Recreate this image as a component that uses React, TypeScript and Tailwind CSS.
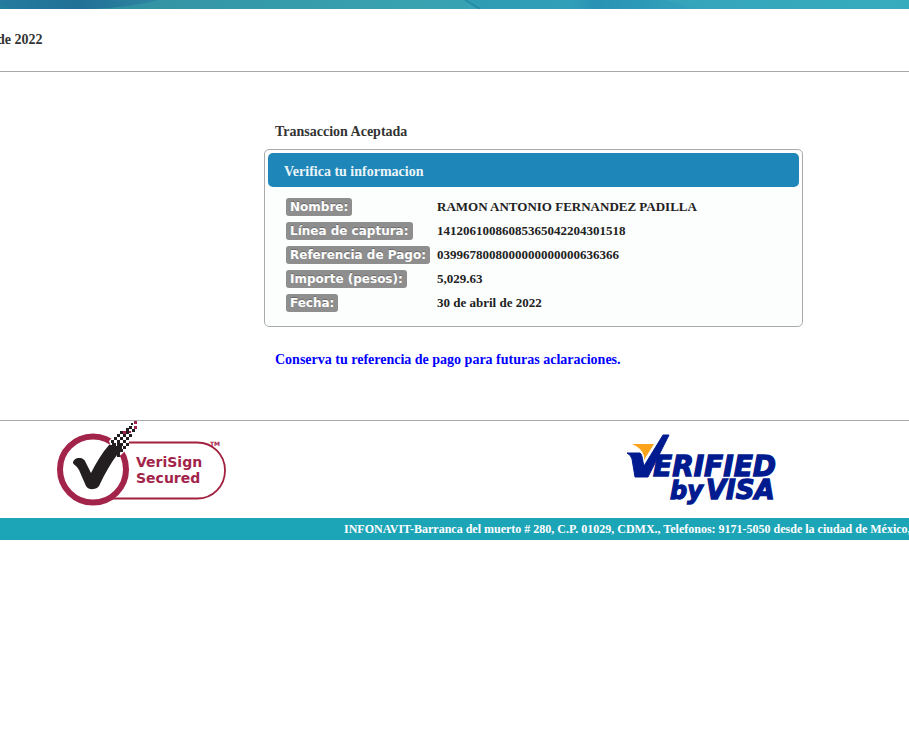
type Row = { label: string; value: string };

const rows: Row[] = [
  { label: "Nombre:", value: "RAMON ANTONIO FERNANDEZ PADILLA" },
  { label: "Línea de captura:", value: "14120610086085365042204301518" },
  { label: "Referencia de Pago:", value: "0399678008000000000000636366" },
  { label: "Importe (pesos):", value: "5,029.63" },
  { label: "Fecha:", value: "30 de abril de 2022" },
];

function Banner() {
  return (
    <svg className="block h-[9px] w-full" viewBox="0 0 909 9" preserveAspectRatio="none" aria-hidden="true">
      <defs>
        <linearGradient id="sea">
          <stop offset="0" stopColor="#23809b" />
          <stop offset="0.17" stopColor="#3494a4" />
          <stop offset="0.45" stopColor="#38a2b1" />
          <stop offset="0.72" stopColor="#36a4bb" />
          <stop offset="1" stopColor="#35acbd" />
        </linearGradient>
        <linearGradient id="deep">
          <stop offset="0" stopColor="#247b9e" />
          <stop offset="0.5" stopColor="#217096" />
          <stop offset="1" stopColor="#2f86a2" />
        </linearGradient>
        <linearGradient id="wave">
          <stop offset="0" stopColor="#2e9cb1" />
          <stop offset="0.45" stopColor="#329fb9" />
          <stop offset="0.55" stopColor="#2a93b5" />
          <stop offset="0.75" stopColor="#2d99b8" />
          <stop offset="1" stopColor="#35a4bb" />
        </linearGradient>
      </defs>
      <rect width="909" height="9" fill="url(#sea)" />
      <path d="M0 0H158Q132 7 92 9H12L0 5Z" fill="url(#deep)" />
      <path d="M465 0H665L700 9H480Z" fill="url(#wave)" />
      <path d="M465 0L480 9" stroke="#268ba5" strokeWidth="2" />
    </svg>
  );
}

function VeriSignLogo() {
  return (
    <svg className="block" width="172" height="88" viewBox="0 0 172 88" role="img" aria-label="VeriSign Secured">
      <path d="M66 21.500H142C158 21.500 170 34 170 49.500C170 65 158 77.500 142 77.500H56" fill="none" stroke="#a3203f" strokeWidth="1.800" />
      <circle cx="38" cy="48.500" r="33" fill="#fff" stroke="#a3244a" strokeWidth="6" />
      <path d="M54 20L60 14H74V26L66 34L60 36Z" fill="#fff" />
      <path d="M18 42C18 39 21 37 24 37C28 37 30 39 31 42L36 52C41 42 47 32 54 24H57V22H61V25H67V30H65V34H62C56 42 50 52 45 63C43 69 34 70 31 65L24 49C22 45 19 44 18 42Z" fill="#231f20" />
      <g fill="#231f20" shapeRendering="crispEdges">
        <path d="M56 19h3v3h-3zM62 19h3v3h-3zM59 16h3v3h-3zM65 22h3v3h-3zM65 28h3v3h-3zM62 13h3v3h-3zM65 16h3v3h-3zM68 19h3v3h-3zM62 22h3v3h-3zM68 25h3v3h-3zM62 33h3v3h-3zM65 10h3v3h-3zM68 13h3v3h-3zM71 16h3v3h-3zM71 22h3v3h-3zM71 10h3v3h-3zM74 13h3v3h-3zM71 7h3v3h-3zM74 5h3v3h-3zM77 8h3v3h-3zM76 2h2v2h-2z" />
      </g>
      <path d="M79 0h3v3h-3zM79 5h3v3h-3zM68 10h3v3h-3zM74 10h2v2h-2z" fill="#a3244a" shapeRendering="crispEdges" />
      <g fill="#a3244a" fontFamily="'DejaVu Sans', sans-serif" fontWeight="700">
        <text x="81" y="46" fontSize="14">VeriSign</text>
        <text x="81" y="62" fontSize="14">Secured</text>
        <text x="155" y="25" fontSize="6">TM</text>
      </g>
    </svg>
  );
}

function VisaLogo() {
  return (
    <svg className="block" width="160" height="80" viewBox="0 0 160 80" role="img" aria-label="Verified by Visa">
      <path d="M5 13H27L17 29V25Q15 17 5 13Z" fill="#fda31b" />
      <path d="M0 22H13Q15 23 16 31L17 35L36 4H42L21 46H8L5 28Q4 24 0 22Z" fill="#001a8f" stroke="#001a8f" />
      <g fill="#001a8f" stroke="#001a8f" strokeWidth="1.300" fontFamily="'DejaVu Sans', sans-serif" fontWeight="700" fontStyle="italic">
        <text x="26" y="45" fontSize="28">ERIFIED</text>
        <text x="43" y="68" fontSize="24">by</text>
        <text x="79" y="68" fontSize="26">VISA</text>
      </g>
    </svg>
  );
}

export default function App() {
  return (
    <div className="w-full overflow-hidden bg-white font-['Liberation_Serif',serif] text-sm font-bold text-[#333]">
      <header className="border-b border-[#aaa]">
        <Banner />
        <p className="-ml-[3px] py-[21px]">de 2022</p>
      </header>

      <main className="border-b border-[#aaa] pt-[50px] pr-[106px] pb-[50px] pl-[264px]">
        <h1 className="pl-[11px]">Transaccion Aceptada</h1>
        <section className="mt-[7px] rounded-[5px] border border-[#aaa] bg-[#fcfdfd] p-[3px]">
          <h2 className="rounded-[5px] bg-[#1f86ba] px-4 pt-[9px] pb-[5px] text-[#eaf5f7]">Verifica tu informacion</h2>
          <table className="mt-2 mb-2 ml-[18px] text-[13px] leading-4 text-[#222]">
            <tbody>
              {rows.map((row) => (
                <tr key={row.label} className="h-6">
                  <th scope="row" className="w-[151px] p-0 text-left font-bold">
                    <span className="inline-block rounded-[3px] bg-[#8e8e8e] px-1 py-px font-['DejaVu_Sans',sans-serif] text-xs leading-4 whitespace-nowrap text-white [text-shadow:0_-1px_0_rgba(0,0,0,0.25)]">
                      {row.label}
                    </span>
                  </th>
                  <td className="p-0">{row.value}</td>
                </tr>
              ))}
            </tbody>
          </table>
        </section>
        <p className="mt-[23px] pl-[11px] text-[#00f]">Conserva tu referencia de pago para futuras aclaraciones.</p>
      </main>

      <div className="flex h-[97px] items-start">
        <div className="w-[627px] shrink-0 pl-[55px]">
          <VeriSignLogo />
        </div>
        <div className="pt-[10px]">
          <VisaLogo />
        </div>
      </div>

      <footer className="bg-[#1ca4b7] pl-[344px] text-xs leading-[22px] whitespace-nowrap text-white">
        INFONAVIT-Barranca del muerto # 280, C.P. 01029, CDMX., Telefonos: 9171-5050 desde la ciudad de México,
      </footer>
    </div>
  );
}
